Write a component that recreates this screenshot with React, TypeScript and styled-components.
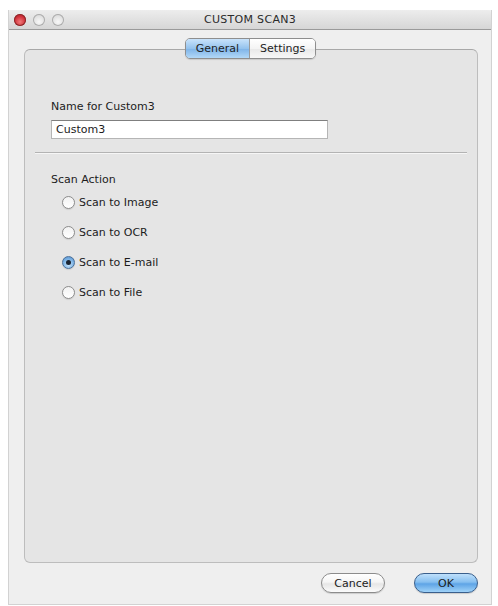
import React from "react";
import styled, { createGlobalStyle } from "styled-components";

const GlobalStyle = createGlobalStyle`
  html, body { margin: 0; padding: 0; background: #ffffff; }
  body { font-family: "DejaVu Sans", "Liberation Sans", sans-serif; }
  * { box-sizing: border-box; }
`;

const Window = styled.div`
  margin: 10px 6px 0 8px;
  width: 484px;
  height: 595px;
  background: #efefef;
  border: 1px solid #d2d2d2;
  border-top: none;
  display: flex;
  flex-direction: column;
`;

const TitleBar = styled.div`
  height: 20px;
  flex: none;
  display: flex;
  align-items: center;
  position: relative;
  background: linear-gradient(#ededed, #d6d6d6);
  border-bottom: 1px solid #9a9a9a;
  border-radius: 4px 4px 0 0;
`;

const Lights = styled.div`
  display: flex;
  gap: 7px;
  padding-left: 5px;
`;

const Light = styled.span<{ $red?: boolean }>`
  width: 12px;
  height: 12px;
  border-radius: 50%;
  background: ${(p) =>
    p.$red
      ? "radial-gradient(circle at 50% 65%, #f07a7a 0%, #d0303a 55%, #9a1c24 100%)"
      : "radial-gradient(circle at 50% 65%, #f8f8f8 0%, #e0e0e0 60%, #b4b4b4 100%)"};
  box-shadow: inset 0 0 0 1px ${(p) => (p.$red ? "#8a2a2a" : "#acacac")};
`;

const Title = styled.div`
  position: absolute;
  left: 0;
  right: 0;
  text-align: center;
  font-size: 11px;
  color: #2b2b2b;
  letter-spacing: 0.3px;
  pointer-events: none;
`;

const Body = styled.div`
  flex: 1;
  display: flex;
  flex-direction: column;
  padding: 8px 13px 0 15px;
`;

const TabBar = styled.div`
  display: flex;
  justify-content: center;
  position: relative;
  z-index: 1;
  padding-right: 1px;
`;

const TabGroup = styled.div`
  display: flex;
  border: 1px solid #8e8e8e;
  border-radius: 5px;
  overflow: hidden;
  box-shadow: 0 1px 1px rgba(0, 0, 0, 0.12);
`;

const Tab = styled.div<{ $active?: boolean }>`
  height: 19px;
  padding: 0 ${(p) => (p.$active ? "10px" : "10px")};
  display: flex;
  align-items: center;
  font-size: 11px;
  color: #1e1e1e;
  background: ${(p) =>
    p.$active
      ? "linear-gradient(#c9e3fb 0%, #94c3ee 50%, #7db3e8 51%, #b2d8f7 100%)"
      : "linear-gradient(#ffffff 0%, #f4f4f4 50%, #e8e8e8 51%, #f7f7f7 100%)"};
  & + & {
    border-left: 1px solid #9a9a9a;
  }
`;

const Panel = styled.div`
  margin-top: -10px;
  height: 514px;
  background: #e5e5e5;
  border: 1px solid #bdbdbd;
  border-top-color: #a8a8a8;
  border-radius: 6px;
  display: flex;
  flex-direction: column;
  padding: 50px 0 0 0;
`;

const Section = styled.div<{ $gap?: number }>`
  display: flex;
  flex-direction: column;
  padding: 0 0 0 26px;
  margin-top: ${(p) => p.$gap ?? 0}px;
`;

const Label = styled.div`
  font-size: 11px;
  color: #1c1c1c;
  line-height: 14px;
`;

const TextInput = styled.div`
  margin-top: 6px;
  width: 277px;
  height: 19px;
  background: #ffffff;
  border: 1px solid #b5b5b5;
  border-top-color: #7f7f7f;
  font-size: 11px;
  color: #1c1c1c;
  padding: 1px 4px;
  line-height: 15px;
`;

const Separator = styled.div`
  margin: 13px 10px 0 10px;
  height: 2px;
  border-top: 1px solid #b3b3b3;
  border-bottom: 1px solid #f6f6f6;
`;

const RadioList = styled.div`
  display: flex;
  flex-direction: column;
  gap: 16px;
  margin-top: 8px;
  padding-left: 11px;
`;

const RadioRow = styled.div`
  display: flex;
  align-items: center;
  gap: 4px;
  height: 14px;
  font-size: 11px;
  color: #1c1c1c;
`;

const RadioCircle = styled.span<{ $checked?: boolean }>`
  width: 13px;
  height: 13px;
  border-radius: 50%;
  display: flex;
  align-items: center;
  justify-content: center;
  border: 1px solid ${(p) => (p.$checked ? "#4a6f98" : "#8c8c8c")};
  background: ${(p) =>
    p.$checked
      ? "radial-gradient(circle at 50% 70%, #c8e4fb 0%, #7fb5e6 55%, #4f8bcd 100%)"
      : "linear-gradient(#f2f2f2, #ffffff)"};
  box-shadow: 0 1px 1px rgba(0, 0, 0, 0.1);
`;

const Dot = styled.span`
  width: 5px;
  height: 5px;
  border-radius: 50%;
  background: #1a2432;
`;

const Footer = styled.div`
  display: flex;
  justify-content: flex-end;
  gap: 29px;
  padding: 10px 0 0 0;
`;

const Button = styled.div<{ $primary?: boolean }>`
  width: 64px;
  height: 20px;
  border-radius: 10px;
  display: flex;
  align-items: center;
  justify-content: center;
  font-size: 11px;
  color: #1c1c1c;
  border: 1px solid ${(p) => (p.$primary ? "#3a5f8c" : "#8c8c8c")};
  background: ${(p) =>
    p.$primary
      ? "linear-gradient(#bfe0fb 0%, #86bff0 45%, #5ea4e6 55%, #9fd2f8 100%)"
      : "linear-gradient(#ffffff 0%, #f5f5f5 45%, #e6e6e6 55%, #fbfbfb 100%)"};
  box-shadow: 0 1px 1px rgba(0, 0, 0, 0.15);
`;

const options = [
  { label: "Scan to Image", checked: false },
  { label: "Scan to OCR", checked: false },
  { label: "Scan to E-mail", checked: true },
  { label: "Scan to File", checked: false },
];

export default function App() {
  return (
    <>
      <GlobalStyle />
      <Window>
        <TitleBar>
          <Lights>
            <Light $red />
            <Light />
            <Light />
          </Lights>
          <Title>CUSTOM SCAN3</Title>
        </TitleBar>
        <Body>
          <TabBar>
            <TabGroup>
              <Tab $active>General</Tab>
              <Tab>Settings</Tab>
            </TabGroup>
          </TabBar>
          <Panel>
            <Section>
              <Label>Name for Custom3</Label>
              <TextInput>Custom3</TextInput>
            </Section>
            <Separator />
            <Section $gap={19}>
              <Label>Scan Action</Label>
              <RadioList>
                {options.map((o) => (
                  <RadioRow key={o.label}>
                    <RadioCircle $checked={o.checked}>{o.checked && <Dot />}</RadioCircle>
                    {o.label}
                  </RadioRow>
                ))}
              </RadioList>
            </Section>
          </Panel>
          <Footer>
            <Button>Cancel</Button>
            <Button $primary>OK</Button>
          </Footer>
        </Body>
      </Window>
    </>
  );
}
